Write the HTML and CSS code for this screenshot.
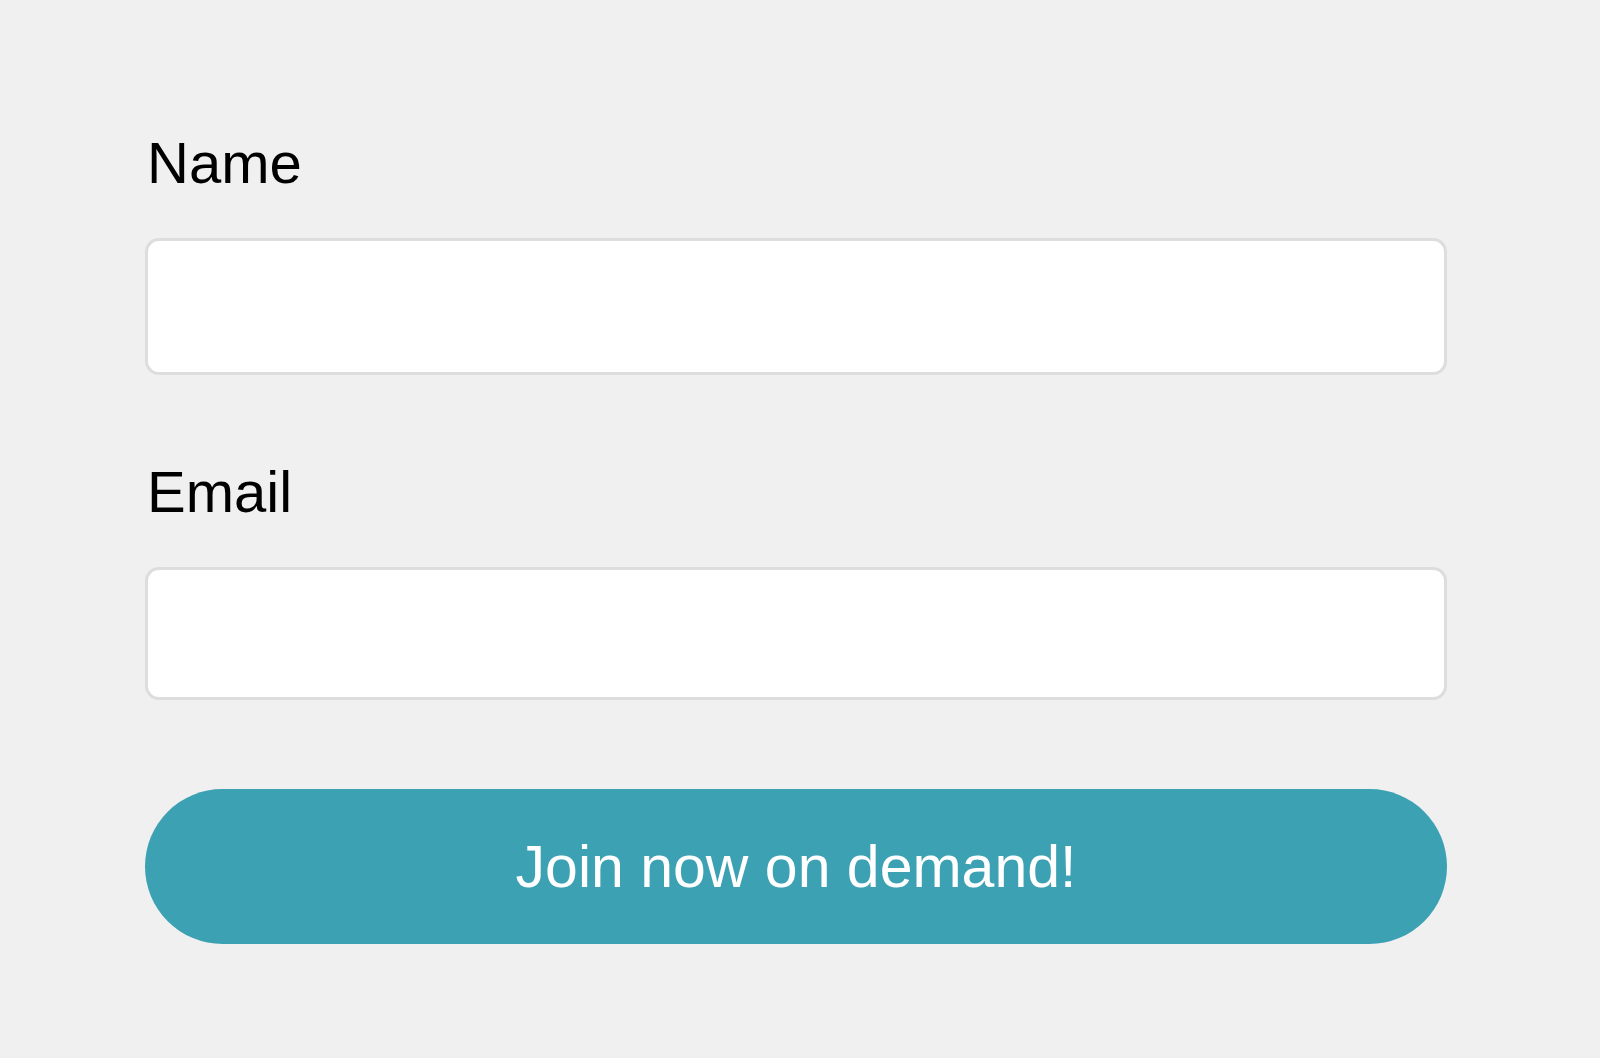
FILE: index.html
```html
<!DOCTYPE html>
<html lang="en">
<head>
    <meta charset="UTF-8">
    <meta name="viewport" content="width=device-width, initial-scale=1.0">
    <title>Join now on demand</title>
    <link rel="stylesheet" href="styles.css">
</head>
<body>

    <!-- Signup Form -->
    <form class="signup-form" onsubmit="return false;">
        <label class="field-label" for="name">Name</label>
        <input type="text" id="name" class="input-box input-first">

        <label class="field-label field-next" for="email">Email</label>
        <input type="email" id="email" class="input-box">

        <button type="submit" class="btn">Join now on demand!</button>
    </form>

</body>
</html>
```

FILE: styles.css
```css
/* General Styles */
body {
    font-family: "Liberation Sans", Arial, sans-serif;
    background-color: #f0f0f0;
    color: #000;
    margin: 0;
    padding: 130px 153px 0 145px;
}

/* Form */
.signup-form {
    display: flex;
    flex-direction: column;
}

/* Labels */
.field-label {
    display: block;
    padding-left: 2px;
    font-size: 58px;
    line-height: 66px;
    margin-bottom: 42px;
}

.field-next {
    margin-top: 84px;
}

/* Inputs */
.input-box {
    box-sizing: border-box;
    width: 100%;
    height: 133px;
    margin: 0;
    padding: 0 24px;
    font-size: 40px;
    font-family: inherit;
    background: #fff;
    border: 3px solid #dddddd;
    border-radius: 14px;
    outline: none;
}

.input-first {
    height: 137px;
}

/* Button */
.btn {
    box-sizing: border-box;
    width: 100%;
    height: 155px;
    margin-top: 89px;
    padding: 0;
    font-family: inherit;
    font-size: 59px;
    color: #fff;
    background: #3da1b4;
    border: none;
    border-radius: 78px;
    cursor: pointer;
}
```
